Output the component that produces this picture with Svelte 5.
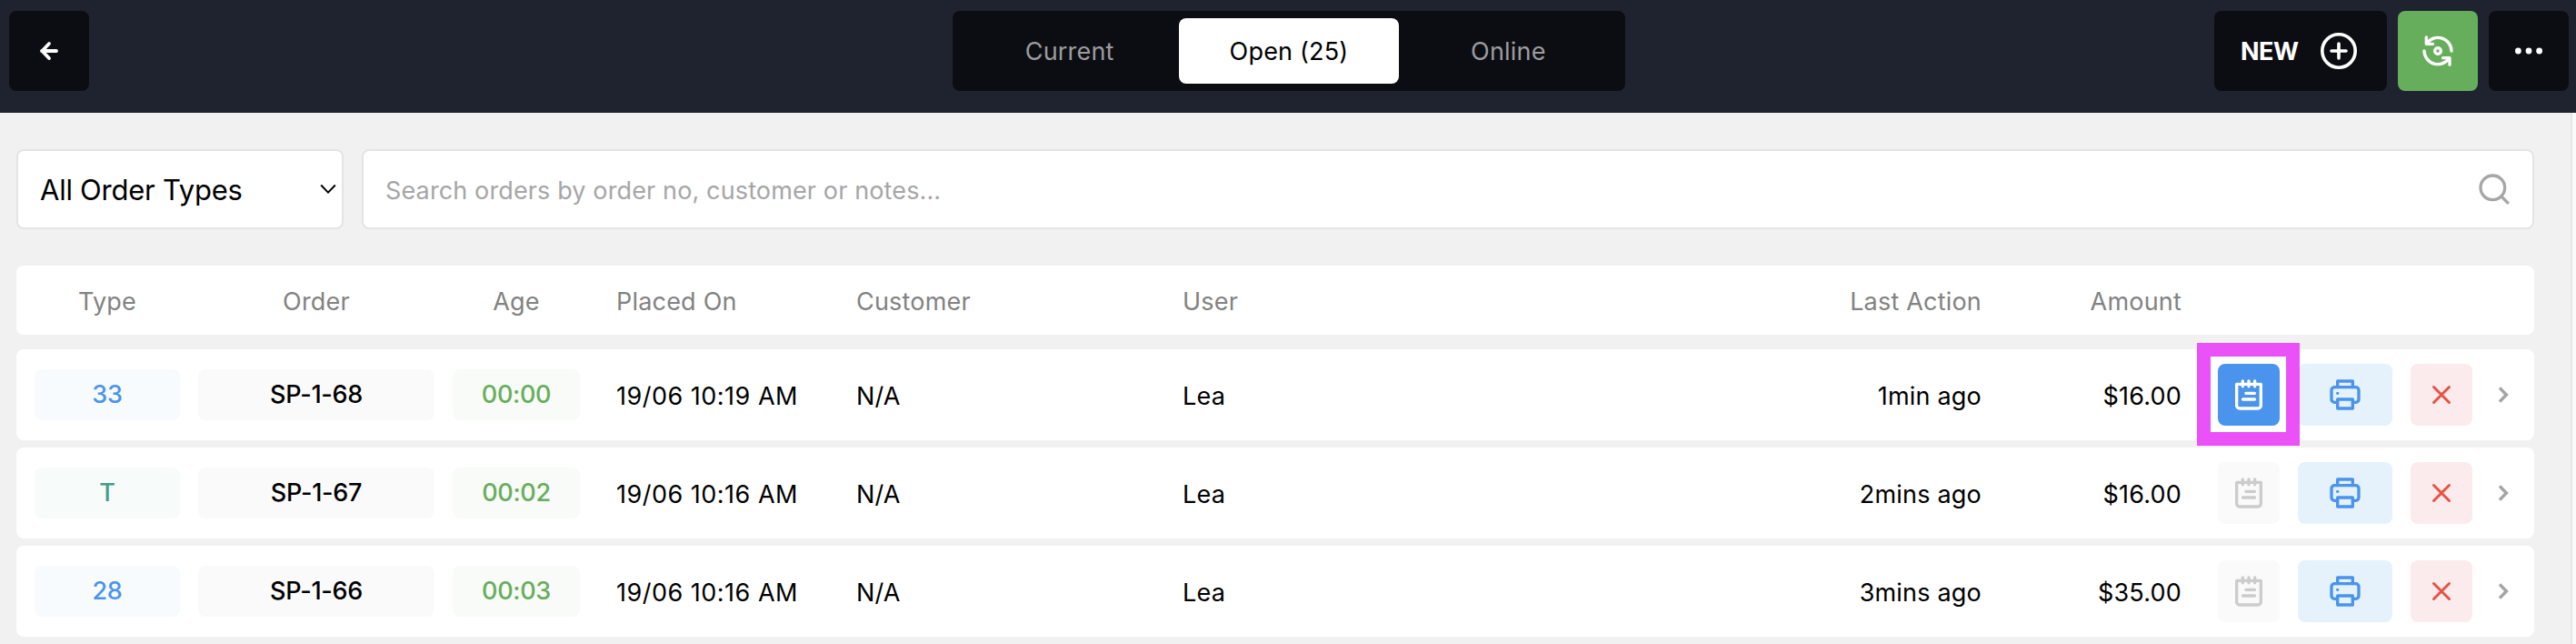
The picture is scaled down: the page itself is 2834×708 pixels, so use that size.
<script lang="ts">
  interface Order {
    type: string;
    kind: 'table' | 'takeaway';
    order: string;
    age: string;
    placedOn: string;
    customer: string;
    user: string;
    lastAction: string;
    amount: string;
    hasNotes: boolean;
  }

  const tabs = ['Current', 'Open (25)', 'Online'];
  let activeTab = $state(1);
  let query = $state('');

  const orders: Order[] = [
    { type: '33', kind: 'table', order: 'SP-1-68', age: '00:00', placedOn: '19/06 10:19 AM', customer: 'N/A', user: 'Lea', lastAction: '1min ago', amount: '$16.00', hasNotes: true },
    { type: 'T', kind: 'takeaway', order: 'SP-1-67', age: '00:02', placedOn: '19/06 10:16 AM', customer: 'N/A', user: 'Lea', lastAction: '2mins ago', amount: '$16.00', hasNotes: false },
    { type: '28', kind: 'table', order: 'SP-1-66', age: '00:03', placedOn: '19/06 10:16 AM', customer: 'N/A', user: 'Lea', lastAction: '3mins ago', amount: '$35.00', hasNotes: false },
  ];
</script>

<div class="app">
  <header class="topbar">
    <div class="side">
      <button class="btn square" aria-label="Back">
        <svg class="stroke" width="28" height="28" viewBox="0 0 28 28" stroke-width="3.8">
          <path d="M22 14H6M14 6L6.4 14l7.6 8" />
        </svg>
      </button>
    </div>

    <nav class="tabs">
      {#each tabs as tab, i}
        <button class="tab" class:active={i === activeTab} onclick={() => (activeTab = i)}>{tab}</button>
      {/each}
    </nav>

    <div class="side end">
      <button class="btn new">
        <span>NEW</span>
        <svg class="stroke" width="40" height="40" viewBox="0 0 40 40" stroke-width="3.6">
          <circle cx="20" cy="20" r="18.2" />
          <path d="M12 20h16M20 12v16" />
        </svg>
      </button>
      <button class="btn square sync" aria-label="Sync">
        <svg class="stroke" width="40" height="40" viewBox="0 0 24 24" stroke-width="2">
          <path d="M21 12A9 9 0 0 0 4.4 7.4M4.4 2.9v4.5h4.3" />
          <path d="M3 12a9 9 0 0 0 16.6 4.6M19.8 21.1v-4.5h-4.4" />
          <circle cx="12" cy="12" r="2" />
        </svg>
      </button>
      <button class="btn square" aria-label="More">
        <svg width="40" height="40" viewBox="0 0 40 40" fill="currentColor">
          <circle cx="8.4" cy="20" r="3.4" />
          <circle cx="20" cy="20" r="3.4" />
          <circle cx="31.6" cy="20" r="3.4" />
        </svg>
      </button>
    </div>
  </header>

  <div class="body">
    <main class="content">
      <div class="filters">
        <button class="select">
          <span>All Order Types</span>
          <svg width="18" height="12" viewBox="0 0 18 12" fill="none" stroke="currentColor" stroke-width="2">
            <path d="M1.2 1.5L9 9.6l7.8-8.1" />
          </svg>
        </button>
        <div class="search">
          <input bind:value={query} placeholder="Search orders by order no, customer or notes..." />
          <svg width="40" height="40" viewBox="0 0 24 24" fill="none" stroke="currentColor" stroke-width="2">
            <circle cx="11" cy="11" r="8" />
            <path d="M16.7 16.7l4.8 4.8" />
          </svg>
        </div>
      </div>

      <div class="row head">
        <span class="center">Type</span>
        <span class="center">Order</span>
        <span class="center">Age</span>
        <span class="text">Placed On</span>
        <span class="text">Customer</span>
        <span class="text">User</span>
        <span class="right">Last Action</span>
        <span class="right">Amount</span>
      </div>

      {#each orders as o}
        <div class="row">
          <span class="pill {o.kind}">{o.type}</span>
          <span class="pill">{o.order}</span>
          <span class="pill age">{o.age}</span>
          <span class="text date">{o.placedOn}</span>
          <span class="text">{o.customer}</span>
          <span class="text">{o.user}</span>
          <span class="right">{o.lastAction}</span>
          <span class="right">{o.amount}</span>
          <div class="actions">
            <div class="note-wrap">
              <button class="action note" class:filled={o.hasNotes} aria-label="Notes">
                <svg class="stroke" width="40" height="40" viewBox="0 0 24 24" stroke-width="2">
                  <path d="M4 5h16v14a2 2 0 0 1-2 2H6a2 2 0 0 1-2-2z" />
                  <path d="M8 3v3.500M12 3v3.500M16 3v3.500M10.100 11h5.800M8.100 15h7.800" />
                </svg>
              </button>
              {#if o.hasNotes}
                <span class="highlight"></span>
              {/if}
            </div>
            <button class="action print" aria-label="Print">
              <svg class="stroke" width="40" height="40" viewBox="0 0 24 24" stroke-width="2">
                <path d="M7 7V3h10v4" />
                <path d="M7 17H5a2 2 0 0 1-2-2V9a2 2 0 0 1 2-2h14a2 2 0 0 1 2 2v6a2 2 0 0 1-2 2h-2" />
                <path d="M7 15h10v6H7z" />
                <circle cx="7" cy="11" r="1" fill="currentColor" stroke="none" />
              </svg>
            </button>
            <button class="action remove" aria-label="Remove">
              <svg class="stroke" width="24" height="24" viewBox="0 0 24 24" stroke-width="3">
                <path d="M3.500 3.500l17 17M20.500 3.500l-17 17" />
              </svg>
            </button>
            <svg class="chevron" width="12" height="20" viewBox="0 0 12 20" fill="none" stroke="currentColor" stroke-width="3.500">
              <path d="M2 2.400L9.400 10 2 17.600" />
            </svg>
          </div>
        </div>
      {/each}
    </main>
    <div class="scrollbar"></div>
  </div>
</div>

<style>
  :global(body) {
    margin: 0;
    overflow: hidden;
  }

  .app {
    display: flex;
    flex-direction: column;
    height: 708px;
    overflow: hidden;
    background: #f1f1f1;
    color: #000;
    font-family: Inter, 'Liberation Sans', sans-serif;
    font-size: 27px;
    letter-spacing: 0.2px;
  }

  button,
  input {
    margin: 0;
    padding: 0;
    border: none;
    background: none;
    font: inherit;
    letter-spacing: inherit;
    color: inherit;
  }

  svg {
    display: block;
    flex: none;
  }

  .stroke {
    fill: none;
    stroke: currentColor;
    stroke-linecap: round;
    stroke-linejoin: round;
  }

  /* Top bar */
  .topbar {
    display: flex;
    flex: none;
    align-items: flex-start;
    height: 124px;
    padding: 12px 8px 0 10px;
    box-sizing: border-box;
    background: #1f232f;
  }

  .side {
    display: flex;
    flex: 1;
    gap: 12px;

    &.end {
      justify-content: flex-end;
    }
  }

  .btn {
    display: flex;
    align-items: center;
    justify-content: center;
    height: 88px;
    border-radius: 8px;
    background: #0c0d12;
    color: #fff;

    &.square {
      width: 88px;
    }

    &.new {
      justify-content: space-between;
      width: 190px;
      padding: 0 33px 0 29px;
      box-sizing: border-box;
      font-weight: 700;
      letter-spacing: -0.5px;
    }

    &.sync {
      background: #67ae5c;
    }
  }

  .tabs {
    display: flex;
    width: 740px;
    height: 88px;
    padding: 8px;
    box-sizing: border-box;
    border-radius: 8px;
    background: #0c0d12;
  }

  .tab {
    flex: 1;
    border-radius: 8px;
    color: #9c9c9e;

    &.active {
      background: #fff;
      color: #000;
    }
  }

  /* Page body */
  .body {
    display: flex;
    flex: 1;
  }

  .content {
    flex: 1;
    padding: 40px 40px 0 18px;
  }

  .scrollbar {
    width: 4px;
    border-left: 2px solid #e6e6e6;
    background: #fafafa;
  }

  .filters {
    display: flex;
    gap: 20px;
    margin-bottom: 40px;
  }

  .select,
  .search {
    display: flex;
    align-items: center;
    height: 88px;
    border: 2px solid #e4e4e4;
    border-radius: 8px;
    box-sizing: border-box;
    background: #fff;
  }

  .select {
    justify-content: space-between;
    width: 360px;
    padding: 0 6px 0 24px;
    font-size: 31px;
    letter-spacing: -0.25px;
  }

  .search {
    flex: 1;
    padding: 0 22px 0 24px;
    color: #a6a6a6;

    input {
      flex: 1;
      padding-top: 2px;
      outline: none;
      color: #000;
      letter-spacing: 0.13px;

      &::placeholder {
        color: #a6a6a6;
        opacity: 1;
      }
    }
  }

  /* Orders */
  .row {
    display: grid;
    grid-template-columns: 160px 260px 140px 244px 339px 1fr 280px 200px 348px;
    column-gap: 20px;
    align-items: center;
    height: 100px;
    margin-bottom: 8px;
    padding: 0 20px;
    border-radius: 8px;
    background: #fff;

    &.head {
      height: 76px;
      margin-bottom: 16px;
      color: #828282;
    }
  }

  .center,
  .text,
  .right {
    padding-top: 2px;
    white-space: nowrap;
  }

  .center {
    text-align: center;
  }

  .text {
    padding-left: 20px;
  }

  .right {
    text-align: right;
  }

  .date {
    letter-spacing: 0.5px;
  }

  .pill {
    height: 56px;
    border-radius: 8px;
    background: #fafafa;
    font-weight: 500;
    letter-spacing: -0.3px;
    line-height: 56px;
    text-align: center;

    &.table {
      background: #f7fbfe;
      color: #4a94ed;
    }

    &.takeaway {
      background: #f7fbfa;
      color: #469c8b;
    }

    &.age {
      background: #f8fbf7;
      color: #67ae5c;
    }
  }

  .actions {
    display: flex;
    align-items: center;
    gap: 20px;
    padding-left: 20px;
  }

  .action {
    display: flex;
    align-items: center;
    justify-content: center;
    width: 68px;
    height: 68px;
    border-radius: 8px;

    &.note {
      background: #fafafa;
      color: #ccc;
    }

    &.filled {
      background: #4a94ed;
      color: #fff;
    }

    &.print {
      width: 104px;
      background: #e5f2fc;
      color: #4a94ed;
    }

    &.remove {
      background: #fcebed;
      color: #e45443;
    }
  }

  .note-wrap {
    position: relative;
  }

  /* Callout frame drawn over the notes button */
  .highlight {
    position: absolute;
    top: -23px;
    left: -23px;
    z-index: 1;
    width: 83px;
    height: 83px;
    border: 15px solid #ea52f7;
    pointer-events: none;
  }

  .chevron {
    margin-left: 8px;
    color: #a5a5a5;
  }
</style>
